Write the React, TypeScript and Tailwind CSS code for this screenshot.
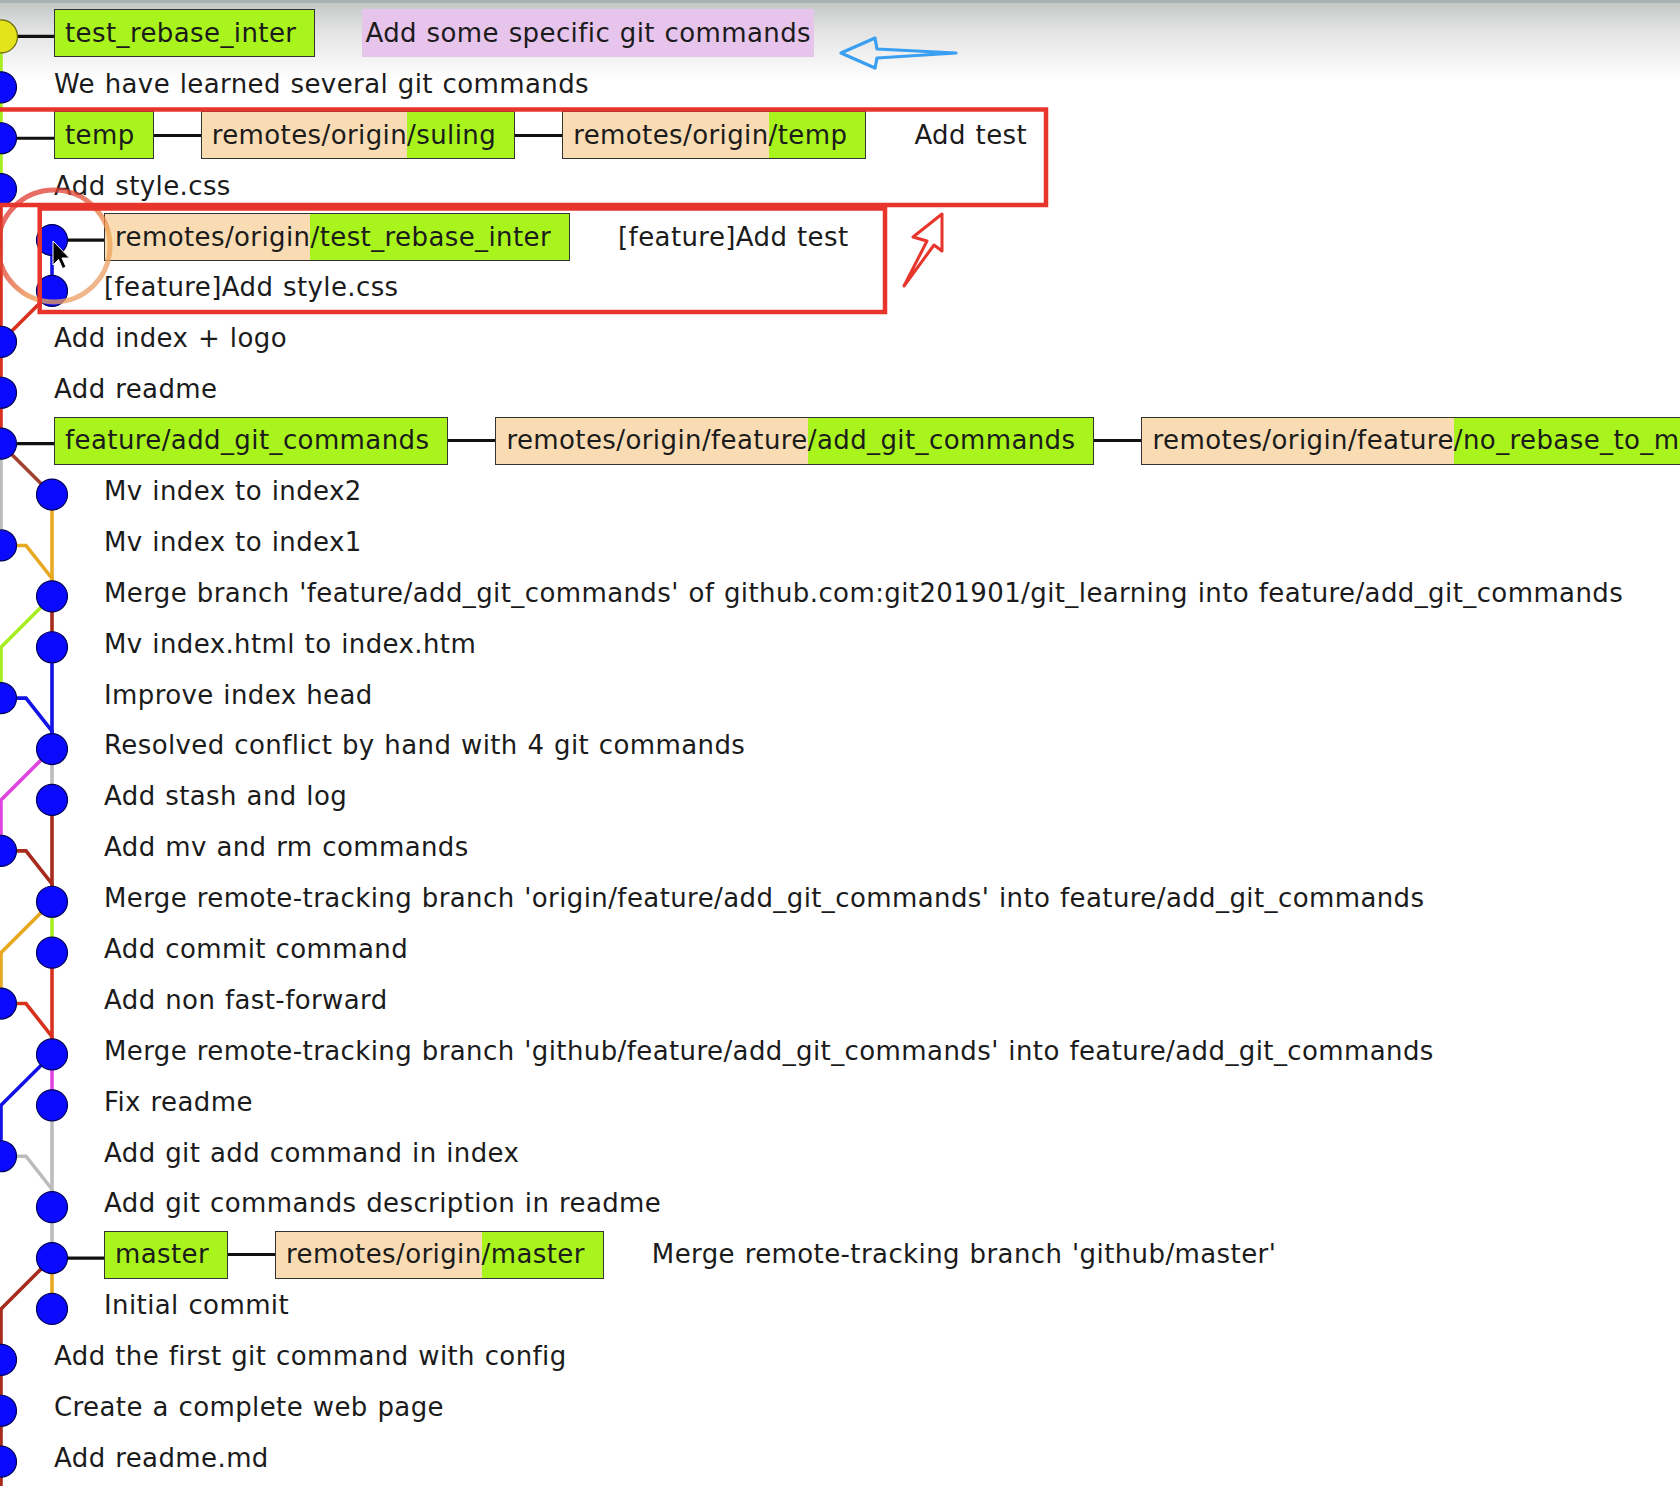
import React from "react"

const ROW = 50.9
const TOP = 8
const L0 = 1
const L1 = 52

const cy = (i: number) => TOP + ROW / 2 + ROW * i

const C = {
  lime: "#a6ee1e",
  red: "#d8321f",
  darkred: "#a82c1e",
  brown: "#a4402e",
  orange: "#e8a922",
  blue: "#1212e6",
  magenta: "#e044e0",
  gray: "#bcbcbc",
}

type Label =
  | { kind: "local"; text: string }
  | { kind: "remote"; base: string; tail: string }

interface Commit {
  lane: 0 | 1
  msg: string
  labels?: Label[]
  highlight?: boolean
  head?: boolean
}

const commits: Commit[] = [
  { lane: 0, head: true, labels: [{ kind: "local", text: "test_rebase_inter" }], msg: "Add some specific git commands", highlight: true },
  { lane: 0, msg: "We have learned several git commands" },
  {
    lane: 0,
    labels: [
      { kind: "local", text: "temp" },
      { kind: "remote", base: "remotes/origin", tail: "/suling" },
      { kind: "remote", base: "remotes/origin", tail: "/temp" },
    ],
    msg: "Add test",
  },
  { lane: 0, msg: "Add style.css" },
  { lane: 1, labels: [{ kind: "remote", base: "remotes/origin", tail: "/test_rebase_inter" }], msg: "[feature]Add test" },
  { lane: 1, msg: "[feature]Add style.css" },
  { lane: 0, msg: "Add index + logo" },
  { lane: 0, msg: "Add readme" },
  {
    lane: 0,
    labels: [
      { kind: "local", text: "feature/add_git_commands" },
      { kind: "remote", base: "remotes/origin/feature", tail: "/add_git_commands" },
      { kind: "remote", base: "remotes/origin/feature", tail: "/no_rebase_to_master" },
    ],
    msg: "",
  },
  { lane: 1, msg: "Mv index to index2" },
  { lane: 0, msg: "Mv index to index1" },
  { lane: 1, msg: "Merge branch 'feature/add_git_commands' of github.com:git201901/git_learning into feature/add_git_commands" },
  { lane: 1, msg: "Mv index.html to index.htm" },
  { lane: 0, msg: "Improve index head" },
  { lane: 1, msg: "Resolved conflict by hand with 4 git commands" },
  { lane: 1, msg: "Add stash and log" },
  { lane: 0, msg: "Add mv and rm commands" },
  { lane: 1, msg: "Merge remote-tracking branch 'origin/feature/add_git_commands' into feature/add_git_commands" },
  { lane: 1, msg: "Add commit command" },
  { lane: 0, msg: "Add non fast-forward" },
  { lane: 1, msg: "Merge remote-tracking branch 'github/feature/add_git_commands' into feature/add_git_commands" },
  { lane: 1, msg: "Fix readme" },
  { lane: 0, msg: "Add git add command in index" },
  { lane: 1, msg: "Add git commands description in readme" },
  {
    lane: 1,
    labels: [
      { kind: "local", text: "master" },
      { kind: "remote", base: "remotes/origin", tail: "/master" },
    ],
    msg: "Merge remote-tracking branch 'github/master'",
  },
  { lane: 1, msg: "Initial commit" },
  { lane: 0, msg: "Add the first git command with config" },
  { lane: 0, msg: "Create a complete web page" },
  { lane: 0, msg: "Add readme.md" },
]

// rows where two lanes are open get their text pushed right
const wide = (i: number) => i === 4 || i === 5 || (i >= 9 && i <= 25)

const lx = (lane: number) => (lane === 0 ? L0 : L1)

// graph segments, each a polyline
const segs: { pts: [number, number][]; color: string }[] = []
const V = (lane: number, a: number, b: number, color: string) =>
  segs.push({ pts: [[lx(lane), cy(a)], [lx(lane), cy(b)]], color })
const DL = (r: number, color: string, toY: number) =>
  segs.push({ pts: [[L1, cy(r)], [L0, cy(r + 1)], [L0, toY]], color })
const BR = (r: number, color: string) =>
  segs.push({ pts: [[L0, cy(r)], [26, cy(r)], [L1, cy(r) + 33], [L1, cy(r + 1)]], color })

V(0, 0, 3, C.lime)
V(0, 3, 8, C.red)
V(1, 4, 5, C.blue)
DL(5, C.red, cy(6))
segs.push({ pts: [[L0, cy(8)], [L1, cy(9)]], color: C.brown })
V(0, 8, 10, C.gray)
V(1, 9, 11, C.orange)
BR(10, C.orange)
DL(11, C.lime, cy(13))
V(1, 11, 12, C.darkred)
V(1, 12, 14, C.blue)
BR(13, C.blue)
DL(14, C.magenta, cy(16))
V(1, 14, 15, C.gray)
V(1, 15, 17, C.darkred)
BR(16, C.darkred)
DL(17, C.orange, cy(19))
V(1, 17, 18, C.lime)
V(1, 18, 20, C.red)
BR(19, C.red)
DL(20, C.blue, cy(22))
V(1, 20, 21, C.magenta)
V(1, 21, 24, C.gray)
BR(22, C.gray)
V(1, 24, 25, C.orange)
DL(24, C.darkred, 1500)

function Graph() {
  return (
    <svg className="absolute left-0 top-0" width={120} height={1486}>
      {segs.map((s, i) => (
        <polyline
          key={i}
          points={s.pts.map((p) => p.join(",")).join(" ")}
          fill="none"
          stroke={s.color}
          strokeWidth={3.6}
          strokeLinejoin="miter"
        />
      ))}
      {commits.map((c, i) =>
        c.labels ? (
          <line key={"l" + i} x1={lx(c.lane)} y1={cy(i)} x2={wide(i) ? 104 : 54} y2={cy(i)} stroke="#111" strokeWidth={3.2} />
        ) : null
      )}
      {commits.map((c, i) => (
        <circle
          key={"c" + i}
          cx={lx(c.lane)}
          cy={cy(i)}
          r={c.head ? 16.5 : 15.5}
          fill={c.head ? "#e4e21a" : "#0a0aff"}
          stroke={c.head ? "#6a6a10" : "#00005a"}
          strokeWidth={1.2}
        />
      ))}
    </svg>
  )
}

function Annotations() {
  return (
    <svg className="pointer-events-none absolute left-0 top-0" width={1680} height={1486}>
      <defs>
        <linearGradient id="ring" x1="0" y1="0" x2="1" y2="1">
          <stop offset="0%" stopColor="#e02e2e" />
          <stop offset="40%" stopColor="#e24a36" />
          <stop offset="70%" stopColor="#f0a850" />
          <stop offset="100%" stopColor="#e8907a" />
        </linearGradient>
      </defs>
      {/* click highlight */}
      <circle cx={54} cy={243} r={56} fill="none" stroke="url(#ring)" strokeWidth={5} opacity={0.75} />
      {/* cursor */}
      <path
        d="M53 238 L53 262 L58.5 256.5 L62.5 265.5 L66 264 L62 255 L69.5 255 Z"
        fill="#000"
        stroke="#fff"
        strokeWidth={1}
        strokeLinejoin="round"
      />
      {/* red boxes */}
      <rect x={-10} y={106.5} width={1056} height={95.5} fill="none" stroke="#e8352b" strokeWidth={4.5} />
      <rect x={39.7} y={205.5} width={845.3} height={103.5} fill="none" stroke="#e8352b" strokeWidth={4.5} />
      {/* blue arrow */}
      <path
        d="M956 50 L877 46 L875 35 L841 50 L875 65 L877 55 Z"
        fill="none"
        stroke="#3a9ff0"
        strokeWidth={3.2}
        strokeLinejoin="round"
      />
      {/* red arrow */}
      <path
        d="M904 283 L927 238 L913 234 L942 211 L942 248 L934 242 Z"
        fill="none"
        stroke="#e8352b"
        strokeWidth={3}
        strokeLinejoin="round"
      />
    </svg>
  )
}

function LabelBox({ label }: { label: Label }) {
  if (label.kind === "local") {
    return (
      <span className="flex h-[48px] shrink-0 items-center border-[1.5px] border-[#333] bg-[#a9f41c] pl-[10px] pr-[18px]">
        {label.text}
      </span>
    )
  }
  return (
    <span className="flex h-[48px] shrink-0 items-stretch border-[1.5px] border-[#333]">
      <span className="flex items-center bg-[#f9dcb4] pl-[10px]">{label.base}</span>
      <span className="flex items-center bg-[#a9f41c] pr-[18px]">{label.tail}</span>
    </span>
  )
}

function Row({ c, i }: { c: Commit; i: number }) {
  return (
    <div className={`flex h-[50.9px] items-center whitespace-nowrap ${wide(i) ? "pl-[104px]" : "pl-[54px]"}`}>
      {c.labels?.map((l, k) => (
        <React.Fragment key={k}>
          {k > 0 && <span className="h-[3.2px] w-[47px] shrink-0 bg-[#111]" />}
          <LabelBox label={l} />
        </React.Fragment>
      ))}
      {c.highlight ? (
        <span className="ml-[47px] flex h-[48px] items-center bg-[#e7c4eb] px-[3px]">{c.msg}</span>
      ) : (
        c.msg && <span className={c.labels ? "ml-[48px]" : ""}>{c.msg}</span>
      )}
    </div>
  )
}

export default function App() {
  return (
    <div className="relative h-[1486px] w-[1680px] overflow-hidden border-t-[3px] border-[#a9b2b2] bg-[linear-gradient(to_bottom,#c6c8c8_0px,#e4e4e4_30px,#ffffff_78px)] font-['DejaVu_Sans',sans-serif] text-[26px] tracking-[0.4px] text-[#1b1b1b] [word-spacing:1px]">
      <Graph />
      <div className="relative pt-[5px]">
        {commits.map((c, i) => (
          <Row key={i} c={c} i={i} />
        ))}
      </div>
      <Annotations />
    </div>
  )
}
